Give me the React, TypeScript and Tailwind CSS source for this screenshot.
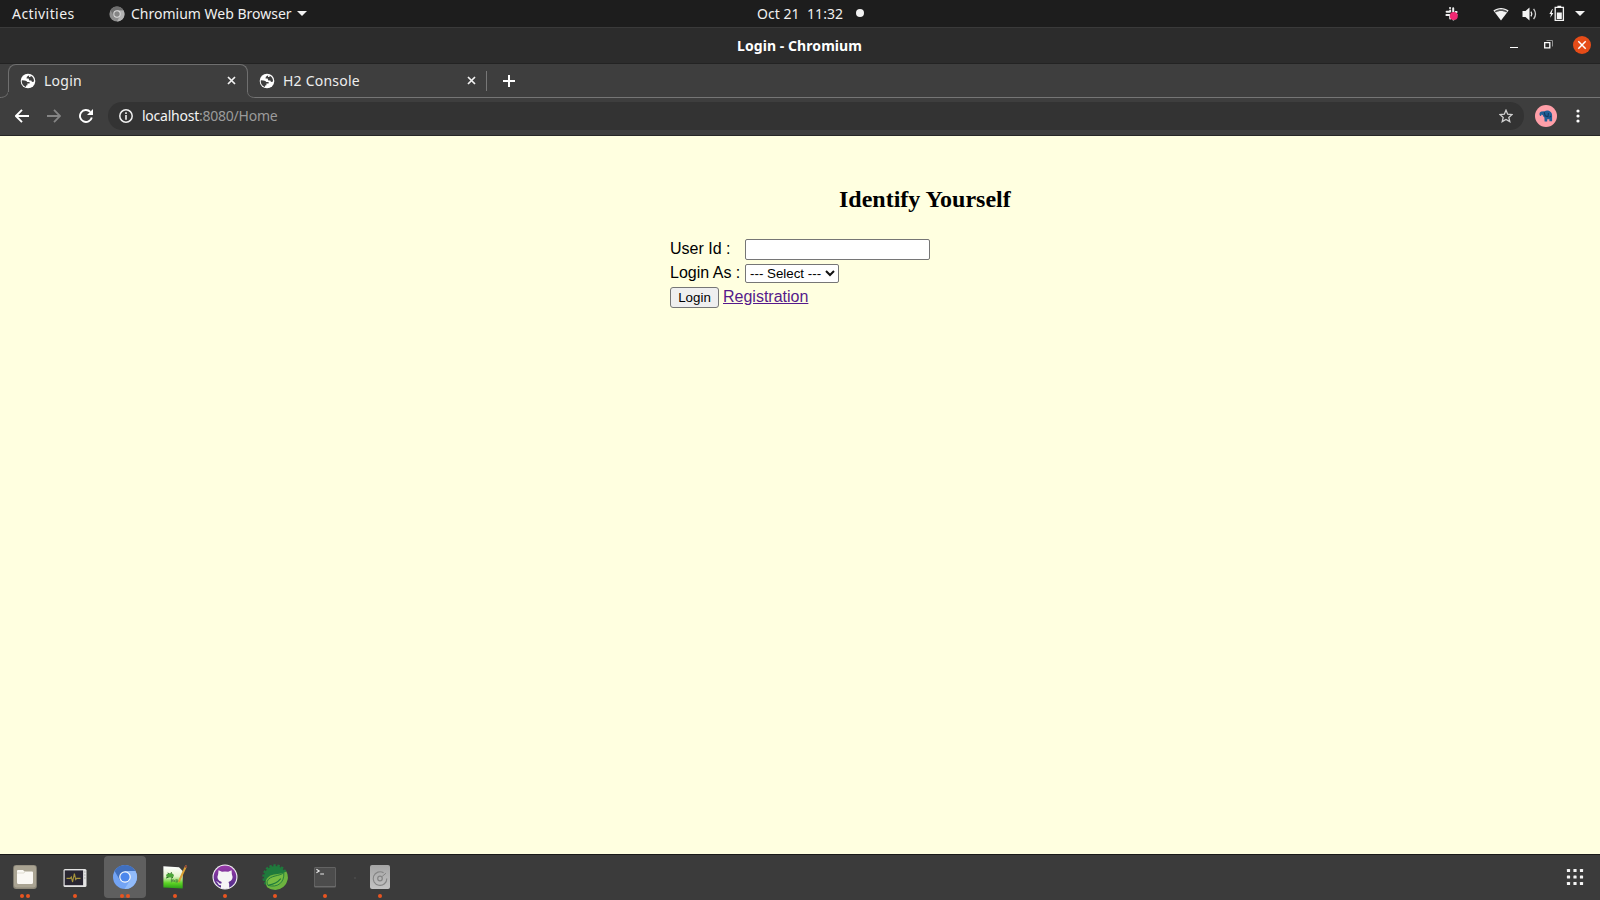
import React from 'react';

const UI = "font-['Noto_Sans','Open_Sans',sans-serif]";

function Globe() {
  return (
    <svg className="block h-4 w-4 shrink-0" viewBox="0 0 16 16">
      <circle cx="8" cy="8" r="7.3" fill="#fff" />
      <path d="M1.9 7.3 4.6 7.4Q6.9 7.4 7.2 9H9.6V10.6H7.4V12.2L6.1 12.4 6 14C3.2 13.2 1.3 10.5 1.9 7.3Z" fill="#3e3e3e" />
      <path d="M9.2 2.2 6.9 3.7 6.5 5.6H8.6L9.3 7.6H11.3L12 8.9 14 8.6C14.2 6 12.9 3.9 10.8 2.8L10.4 4.1H9Z" fill="#3e3e3e" />
    </svg>
  );
}

function TabClose() {
  return (
    <svg className="block h-[9px] w-[9px] shrink-0" viewBox="0 0 9 9">
      <path d="M1 1 8 8M8 1 1 8" stroke="#f2f2f2" strokeWidth="1.7" />
    </svg>
  );
}

function TopBar() {
  return (
    <div className="flex h-[27px] shrink-0 items-center bg-[#1d1d1d] text-[14px] text-[#f0f0f0]">
      <div className="ml-3 w-[97px] whitespace-nowrap leading-[27px] tracking-[0.43px]">Activities</div>
      <svg className="mr-[6px] block h-4 w-4" viewBox="0 0 16 16">
        <circle cx="8" cy="8" r="7.6" fill="#8d8d8d" />
        <path d="M1.3 4.3A7.6 7.6 0 0 1 14.6 4.5H8L4.9 9.8Z" fill="#6f6f6f" />
        <path d="M8 4.5H14.6A7.6 7.6 0 0 1 8 15.6L11.2 9.5Z" fill="#b3b3b3" />
        <circle cx="8" cy="8" r="3.7" fill="#ddd" />
        <circle cx="8" cy="8" r="2.7" fill="#858585" />
      </svg>
      <div className="w-[166px] whitespace-nowrap">Chromium Web Browser</div>
      <svg className="block h-[5px] w-[10px]" viewBox="0 0 10 5"><path d="M0 0H10L5 5Z" fill="#f2f2f2" /></svg>
      <div className="-mt-px ml-[450px] w-[99px] whitespace-pre tracking-[0.05px]">Oct 21  11:32</div>
      <div className="-mt-px h-2 w-2 rounded-full bg-[#f2f2f2]" />
      <svg className="ml-auto block h-4 w-4" viewBox="0 0 16 16">
        <g stroke="#efefef" strokeWidth="2" strokeLinecap="round">
          <path d="M6.2 4.6V5.4M2.6 5.8H5.6M9.2 2.2V5.4M12.6 6.1H11.6M2.4 9.1H5.4M6.2 12.4V9.8" />
          <path d="M6 2.1H6.1M12.4 8.8H12.5M9.4 13.4H9.5" />
        </g>
        <circle cx="9.8" cy="10.1" r="4" fill="#ef2872" />
      </svg>
      <svg className="ml-[33px] block h-[14px] w-4" viewBox="0 0 16 14">
        <path d="M.4 3.6C4.8.1 11.2.1 15.6 3.6L8 13.5Z" fill="#f4f4f4" />
        <path d="M1.7 4.2C5.6 1.6 10.4 1.6 14.3 4.2L13.3 5.5C10 3.5 6 3.5 2.7 5.5Z" fill="#555" />
      </svg>
      <svg className="ml-[13px] block h-4 w-4" viewBox="0 0 16 16">
        <path d="M.5 5H3.5L7.5 1.4V14.6L3.5 11H.5Z" fill="#f4f4f4" />
        <path d="M9 5.6Q10.6 8 9 10.4" fill="none" stroke="#eee" strokeWidth="1.3" />
        <path d="M11.6 2.8Q15.4 8 11.6 13.2" fill="none" stroke="#d0d0d0" strokeWidth="1.3" />
      </svg>
      <svg className="ml-[11px] block h-[17px] w-4" viewBox="0 0 16 17">
        <path d="M3.2 4 .4 9H2L1.2 12.8 4.4 8H2.7L3.8 4Z" fill="#f4f4f4" />
        <path d="M6.2 2.4H14.4V15.4H6.2Z" fill="none" stroke="#f4f4f4" strokeWidth="1.3" />
        <path d="M8.4.8H12.2V2.4H8.4ZM7.8 7.6H12.8V13.9H7.8Z" fill="#f4f4f4" />
      </svg>
      <svg className="ml-[10px] mr-[15px] block h-[5px] w-[10px]" viewBox="0 0 10 5"><path d="M0 0H10L5 5Z" fill="#f2f2f2" /></svg>
    </div>
  );
}

function TitleBar() {
  return (
    <div className="flex h-[37px] shrink-0 items-center border-b border-t border-b-[#232323] border-t-[#3a3a3a] bg-[#2c2c2c]">
      <div className="ml-[737px] w-[150px] whitespace-nowrap text-[14px] font-bold tracking-[0.07px] text-white">Login - Chromium</div>
      <div className="ml-auto mr-[26px] mt-[4px] h-px w-2 bg-white" />
      <svg className="mr-[20px] block h-[9px] w-[9px] -translate-y-px" viewBox="0 0 9 9">
        <path d="M2.5.5H8.5V6.5" fill="none" stroke="#919191" />
        <path d="M.7 2.7H5.8V7.8H.7Z" fill="none" stroke="#fff" strokeWidth="1.3" />
      </svg>
      <svg className="mr-[9px] block h-[18px] w-[18px] -translate-y-px" viewBox="0 0 18 18">
        <circle cx="9" cy="9" r="9" fill="#e64c18" />
        <path d="M5.3 5.3 12.7 12.7M12.7 5.3 5.3 12.7" stroke="#fff" strokeWidth="1.5" />
      </svg>
    </div>
  );
}

function TabStrip() {
  return (
    <div className="flex h-[34px] shrink-0 text-[14px] text-[#ededed]">
      <svg className="block h-[34px] w-2 shrink-0" viewBox="0 0 8 34">
        <path d="M0 33.5C5 33.5 8 31 8.5 27" fill="none" stroke="#6f6f6f" />
      </svg>
      <div className="flex h-[28px] w-[240px] items-center rounded-t-[8px] border border-b-0 border-[#6f6f6f] pl-[11px] pr-[11px] pt-[4px]">
        <Globe />
        <div className="ml-2 tracking-[0.25px]">Login</div>
        <div className="ml-auto"><TabClose /></div>
      </div>
      <svg className="-ml-px block h-[34px] w-2 shrink-0" viewBox="0 0 8 34">
        <path d="M.5 27C.5 31 3 33.5 8 33.5" fill="none" stroke="#6f6f6f" />
      </svg>
      <div className="flex grow items-center border-b border-[#757575]">
        <div className="ml-1 flex h-[33px] w-[217px] items-center">
          <Globe />
          <div className="ml-2 whitespace-nowrap tracking-[0.22px]">H2 Console</div>
          <div className="ml-auto"><TabClose /></div>
        </div>
        <div className="ml-[10px] h-5 w-px bg-[#777]" />
        <svg className="ml-4 block h-3 w-3" viewBox="0 0 12 12"><path d="M6 0V12M0 6H12" stroke="#fff" strokeWidth="2" /></svg>
      </div>
    </div>
  );
}

function Toolbar() {
  return (
    <div className="flex h-[38px] shrink-0 items-center border-b border-[#262626] pb-px">
      <svg className="ml-[15px] block h-[14px] w-[14px]" viewBox="0 0 14 14"><path d="M14 7H1.4M7 .8.9 7 7 13.2" fill="none" stroke="#fff" strokeWidth="1.9" /></svg>
      <svg className="ml-[18px] block h-[14px] w-[14px]" viewBox="0 0 14 14"><path d="M0 7H12.6M7 .8 13.1 7 7 13.2" fill="none" stroke="#858585" strokeWidth="1.8" /></svg>
      <svg className="ml-[18px] block h-[14px] w-[14px]" viewBox="0 0 14 14">
        <path d="M12.8 8.4A6 6 0 1 1 11.3 2.8" fill="none" stroke="#fff" strokeWidth="1.9" />
        <path d="M14 0V6H8Z" fill="#fff" />
      </svg>
      <div className="ml-[15px] flex h-7 w-[1416px] items-center rounded-full bg-[#333] pl-[11px] pr-[11px]">
        <svg className="block h-[14px] w-[14px]" viewBox="0 0 14 14">
          <circle cx="7" cy="7" r="6.2" fill="none" stroke="#f0f0f0" strokeWidth="1.5" />
          <path d="M6.2 3.3H7.8V4.9H6.2ZM6.2 6.1H7.8V10.7H6.2Z" fill="#f0f0f0" />
        </svg>
        <div className="-mt-[2px] ml-[9px] whitespace-nowrap text-[14px] tracking-[-0.24px] text-[#9b9b9b]"><span className="text-[#f4f4f4]">localhost</span>:8080/Home</div>
        <svg className="ml-auto block h-[14px] w-[14px]" viewBox="0 0 14 14">
          <path d="M7 1.2 8.7 5.2 13 5.6 9.8 8.4 10.8 12.6 7 10.4 3.2 12.6 4.2 8.4 1 5.6 5.3 5.2Z" fill="none" stroke="#d0d0d0" strokeWidth="1.3" />
        </svg>
      </div>
      <svg className="ml-[11px] block h-[22px] w-[22px]" viewBox="0 0 22 22">
        <circle cx="11" cy="11" r="11" fill="#ff9fa8" />
        <path d="M4.6 9.9Q4 7.2 6.4 6.4L9.6 6.2Q11 5.2 13.2 5.6 16.9 6.6 17.1 10.2V16.2H14.4V14.2H12.2V16.4H9.6L9.4 12.4Q8 11.8 7.9 10.2L6.4 9.4 6.2 10.8Q5 11.2 4.6 9.9Z" fill="#1f5f96" />
        <path d="M9.2 7.2 10.2 10.8 13 11.8 13.4 8M14.6 12.4 16 11" fill="none" stroke="#12385f" strokeWidth="1.1" />
      </svg>
      <svg className="ml-[19px] block h-[14px] w-[4px]" viewBox="0 0 4 14">
        <circle cx="2" cy="2" r="1.6" fill="#fff" /><circle cx="2" cy="7" r="1.6" fill="#fff" /><circle cx="2" cy="12" r="1.6" fill="#fff" />
      </svg>
    </div>
  );
}

function LoginPage() {
  return (
    <div className="min-h-0 grow bg-[#ffffe0] pl-[670px] pt-[46px] font-['Liberation_Sans',Arial,sans-serif] text-[16px] leading-[18px] text-black">
      <h2 className="ml-[169px] h-[57px] whitespace-nowrap font-['Liberation_Serif',serif] text-[24px] font-bold leading-[34px]">Identify Yourself</h2>
      <div className="flex h-[25px]">
        <label htmlFor="uid" className="w-[75px] pt-px">User Id :</label>
        <input id="uid" className="h-[21px] w-[185px] rounded-[2px] border border-[#767676] bg-white px-1 text-[13.33px]" />
      </div>
      <div className="flex h-[23px]">
        <div className="w-[75px] whitespace-nowrap">Login As :</div>
        <button className="flex h-[19px] w-[94px] items-center rounded-[2px] border border-[#767676] bg-white pl-1 text-[13.33px] leading-[15px]">
          <span className="w-[75px] text-left">--- Select ---</span>
          <svg className="block h-[7px] w-[10px] shrink-0" viewBox="0 0 10 7"><path d="M1 1 5 5 9 1" fill="none" stroke="#111" strokeWidth="2" /></svg>
        </button>
      </div>
      <div className="flex">
        <button className="h-[21px] w-[49px] rounded-[3px] border border-[#767676] bg-[#efefef] text-[13.33px] leading-[19px]">Login</button>
        <a className="ml-1 pt-px text-[#551a8b] underline">Registration</a>
      </div>
    </div>
  );
}

function DockItem({ children, dots = 1, active = false, className = 'w-[50px]' }: { children: React.ReactNode; dots?: number; active?: boolean; className?: string }) {
  return (
    <div className={`flex h-[45px] shrink-0 justify-center pt-px ${className}`}>
      <div className={`flex h-[42px] w-[42px] flex-col items-center rounded-[4px] ${active ? 'bg-[#5f5f5f]' : ''}`}>
        <svg className="mt-2 block h-[26px] w-[26px] shrink-0" viewBox="0 0 26 26">{children}</svg>
        <div className="mt-1 flex gap-[2px]">
          {Array.from({ length: dots }, (_, i) => <i key={i} className="block h-1 w-1 rounded-full bg-[#e95420]" />)}
        </div>
      </div>
    </div>
  );
}

function Dock() {
  return (
    <div className="flex h-[46px] shrink-0 border-t border-[#191919] bg-[#3b3b3b]">
      <DockItem dots={2}>
        <rect x="1.2" y="1" width="23.6" height="24" rx="3" fill="#8f8a7b" />
        <rect x="2" y="1.8" width="22" height="21.6" rx="2.4" fill="#aaa493" />
        <path d="M5 7Q5 6 6 6H11L12.5 7.5H20Q21 7.5 21 8.5V18.5Q21 20 19.5 20H6.5Q5 20 5 18.5Z" fill="#faf8f4" />
        <path d="M5 9H12L13 7.5" fill="none" stroke="#d9d5ca" strokeWidth=".8" />
      </DockItem>
      <DockItem>
        <rect x="1.5" y="5" width="23" height="18" rx="1.5" fill="#e4e4e4" />
        <rect x="2.7" y="6.4" width="18.4" height="14.8" fill="#292632" />
        <path d="M4.5 14.4H8.3L9.3 13 10.6 18 12.4 9.5 13.7 15.5 14.6 14.4H18.5" fill="none" stroke="#a8953c" strokeWidth="1.1" />
        <path d="M22 8H23.5M22 11H23.5M22 14H23.5" stroke="#999" strokeWidth=".8" />
      </DockItem>
      <DockItem dots={2} active>
        <circle cx="13" cy="13" r="12" fill="#73a4f5" />
        <path d="M2.6 7A12 12 0 0 1 23.4 7H13L7.8 16Z" fill="#406fbe" />
        <path d="M13 7H23.4A12 12 0 0 1 12.5 25L18.2 16Z" fill="#91bbfa" />
        <circle cx="13" cy="13" r="5.8" fill="#f5f7fa" />
        <circle cx="13" cy="13" r="4.6" fill="#4d87ec" />
      </DockItem>
      <DockItem>
        <defs><linearGradient id="pad" x2="0" y2="1"><stop stopColor="#fff" /><stop offset=".45" stopColor="#e4f3cd" /><stop offset=".75" stopColor="#5ed425" /><stop offset="1" stopColor="#2a9e17" /></linearGradient></defs>
        <path d="M1.4 2.3 17 3.2 20.7 7V24.5L1.4 23.6Z" fill="url(#pad)" />
        <ellipse cx="8" cy="11.4" rx="3.8" ry="2.2" fill="#4aa638" />
        <path d="M6 8.7 7 10M9.4 8.2 9.2 9.8M4 14 6.5 13.2M9 14.2 11 13.4" stroke="#2f6b26" strokeWidth="1" />
        <path d="M9.4 18.4V15.4L11 17.6V15M12.4 16V18M14 15.2V18.6M14 16H16V17.8H14M17.6 14.6V18" fill="none" stroke="#4a7f3d" strokeWidth=".8" />
        <path d="M23.4 1 25.2 2 18.2 17 16.3 19 16.5 16Z" fill="#daa034" />
        <path d="M23.4 1 25.2 2 24.3 4 22.5 3.2Z" fill="#88423d" />
      </DockItem>
      <DockItem>
        <defs><linearGradient id="cat" x2="0" y2="1"><stop stopColor="#983aa8" /><stop offset="1" stopColor="#4d2c87" /></linearGradient></defs>
        <circle cx="13" cy="13" r="12.5" fill="#f3f3f5" />
        <circle cx="13" cy="13" r="11.4" fill="url(#cat)" />
        <path d="M6.5 6.3 10 7.8Q13 7 16.2 7.8L19.6 6.3 19.8 10Q22.3 15.8 16.5 18L17.2 20V24L13 25 9 24.2V21.3Q6.3 21.4 5.4 18.6L4 17.6Q6.2 17 7.2 19.2L9.2 19.7 9.7 18Q3.7 15.8 6.2 10Z" fill="#f5f5f5" />
      </DockItem>
      <DockItem>
        <circle cx="13" cy="13" r="11" fill="#1f7a3c" />
        <circle cx="13" cy="13" r="11.6" fill="none" stroke="#1f7a3c" strokeWidth="2.2" strokeDasharray="2.4 1.65" />
        <path d="M24.4 7.4A12.7 12.7 0 0 1 5.2 23.2C1.8 17.6 4.6 11.6 12 10.4 17 9.6 21 9.8 24.4 7.4Z" fill="#6db33f" />
        <path d="M21.8 8.6C18.4 12.4 7.6 11 5.2 17.4 4.6 19.8 6 21.4 6 21.4 15.4 24 22.6 18.8 21.8 8.6Z" fill="#77bd43" stroke="#1f7a3c" strokeWidth=".9" />
        <path d="M6 21.2Q14.4 20 18.8 14.6" fill="none" stroke="#1f7a3c" strokeWidth="1.1" />
      </DockItem>
      <DockItem>
        <rect x="2" y="3" width="22" height="20.5" rx="1.5" fill="#6b6b6b" />
        <rect x="2.7" y="3.7" width="20.6" height="18.3" rx="1" fill="#4c4c4c" />
        <path d="M4.4 5.3 7.2 7 4.4 8.7M8.2 10H12" fill="none" stroke="#e8e8e8" strokeWidth="1.1" />
      </DockItem>
      <div className="flex w-[10px] shrink-0 items-center justify-center"><div className="h-[2px] w-[2px] rounded-full bg-[#4d4d4d]" /></div>
      <DockItem className="-ml-[5px] w-[50px]">
        <defs><linearGradient id="disk" x2="0" y2="1"><stop stopColor="#a6a6a6" /><stop offset="1" stopColor="#c2c2c2" /></linearGradient></defs>
        <rect x="3" y="1" width="20" height="24" rx="2" fill="url(#disk)" />
        <path d="M16.6 8.8A6.8 6.8 0 1 0 19.8 14.4" fill="none" stroke="#858585" strokeWidth="1.1" />
        <circle cx="13" cy="14.5" r="2.3" fill="none" stroke="#858585" strokeWidth="1.2" />
        <path d="M15.2 12.4 19 9.2" stroke="#858585" strokeWidth="1" />
      </DockItem>
      <svg className="ml-auto mr-[16px] mt-[13px] block h-[18px] w-[18px]" viewBox="0 0 18 18">
        {[2.5, 9, 15.5].map((y) => [2.5, 9, 15.5].map((x) => <rect key={`${x}-${y}`} x={x - 1.6} y={y - 1.6} width="3.2" height="3.2" rx=".7" fill="#f5f5f5" />))}
      </svg>
    </div>
  );
}

export default function App() {
  return (
    <div className={`flex h-[900px] w-[1600px] flex-col overflow-hidden bg-[#3e3e3e] ${UI}`}>
      <TopBar />
      <TitleBar />
      <TabStrip />
      <Toolbar />
      <LoginPage />
      <Dock />
    </div>
  );
}
